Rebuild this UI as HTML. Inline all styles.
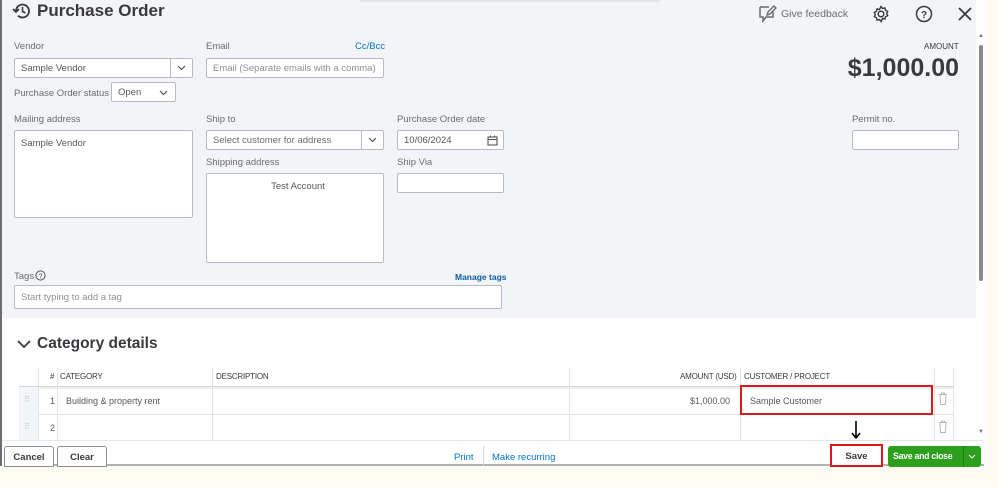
<!DOCTYPE html>
<html><head><meta charset="utf-8"><style>
*{box-sizing:border-box;margin:0;padding:0}
body{width:999px;height:488px;overflow:hidden;background:#fdfbf2;font-family:"Liberation Sans",sans-serif;position:relative;color:#393a3d}
.a{position:absolute}
.lbl{position:absolute;font-size:9.5px;color:#6b6c72}
.in{position:absolute;background:#fff;border:1px solid #b8bbc2;border-radius:2px;font-size:9.5px;color:#55575c;padding-left:6px;display:flex;align-items:center}
.ph{color:#8d9096}
.chev{position:absolute;right:0;top:0;bottom:0;width:22px;border-left:1px solid #b8bbc2;display:flex;align-items:center;justify-content:center}
.th{position:absolute;top:372px;font-size:8px;color:#393a3d;letter-spacing:-.2px}
.vl{position:absolute;width:1px;background:#e0e2e6}
</style></head><body>
<div class="a" style="left:0;top:0;width:986px;height:466px;background:#fff;border-left:2px solid #6d6e72"></div>
<div class="a" style="left:2px;top:0;width:974px;height:318px;background:#f3f4f8"></div>
<div class="a" style="left:360px;top:0;width:300px;height:2px;background:#e3e4e8"></div>
<svg class="a" style="left:12px;top:2px" width="20" height="18" viewBox="0 0 20 18"><path d="M4 9a6.5 6.5 0 1 1 2 4.7" fill="none" stroke="#393a3d" stroke-width="1.8"/><path d="M1 7l3 3 3-3" fill="none" stroke="#393a3d" stroke-width="1.8"/><path d="M10.5 5v4.5l3 1.5" fill="none" stroke="#393a3d" stroke-width="1.6"/></svg>
<div class="a" style="left:37px;top:1px;font-size:17px;font-weight:bold;color:#393a3d">Purchase Order</div>
<svg class="a" style="left:757px;top:5px" width="20" height="18" viewBox="0 0 20 18"><path d="M3 2h9M3 2v10h3v4l3-4h7v-5" fill="none" stroke="#6b6c72" stroke-width="1.5"/><path d="M10 10l1-3 6-6 2 2-6 6z" fill="none" stroke="#6b6c72" stroke-width="1.4"/></svg>
<div class="a" style="left:781px;top:8px;font-size:10.5px;color:#6b6c72">Give feedback</div>
<svg class="a" style="left:872px;top:5px" width="18" height="18" viewBox="0 0 18 18"><circle cx="9" cy="9" r="2.8" fill="none" stroke="#393a3d" stroke-width="1.5"/><path d="M9 1.5l1.5 2 2.4-.6.6 2.4 2.2 1.1-1 2.1 1 2.1-2.2 1.1-.6 2.4-2.4-.6L9 16.5l-1.5-2-2.4.6-.6-2.4L2.3 11.6l1-2.1-1-2.1 2.2-1.1.6-2.4 2.4.6z" fill="none" stroke="#393a3d" stroke-width="1.4"/></svg>
<svg class="a" style="left:915px;top:5px" width="18" height="18" viewBox="0 0 18 18"><circle cx="9" cy="9" r="7.5" fill="none" stroke="#393a3d" stroke-width="1.5"/><text x="9" y="13" font-size="10" font-weight="bold" text-anchor="middle" fill="#393a3d" font-family="Liberation Sans">?</text></svg>
<svg class="a" style="left:958px;top:7px" width="14" height="14" viewBox="0 0 14 14"><path d="M1 1l12 12M13 1L1 13" stroke="#393a3d" stroke-width="1.8"/></svg>
<div class="lbl" style="left:14px;top:41px">Vendor</div>
<div class="in" style="left:14px;top:58px;width:179px;height:20px">Sample Vendor<div class="chev"><svg width="9" height="6"><path d="M1 1l3.5 3.5L8 1" fill="none" stroke="#555" stroke-width="1.2"/></svg></div></div>
<div class="lbl" style="left:206px;top:41px">Email</div>
<div class="a" style="left:355px;top:41px;font-size:9.5px;color:#0077c5">Cc/Bcc</div>
<div class="in" style="left:206px;top:58px;width:178px;height:20px"><span class="ph">Email (Separate emails with a comma)</span></div>
<div class="a" style="left:924px;top:42px;font-size:8px;color:#393a3d">AMOUNT</div>
<div class="a" style="right:40px;top:54px;font-size:25px;font-weight:bold;color:#393a3d">$1,000.00</div>
<div class="lbl" style="left:14px;top:88px">Purchase Order status</div>
<div class="in" style="left:111px;top:82px;width:65px;height:20px">Open<svg class="a" style="right:7px;top:7px" width="9" height="6"><path d="M1 1l3.5 3.5L8 1" fill="none" stroke="#555" stroke-width="1.2"/></svg></div>
<div class="lbl" style="left:14px;top:114px">Mailing address</div>
<div class="in" style="left:14px;top:130px;width:179px;height:88px;align-items:flex-start;padding-top:7px">Sample Vendor</div>
<div class="lbl" style="left:206px;top:114px">Ship to</div>
<div class="in" style="left:206px;top:130px;width:178px;height:20px"><span class="ph" style="color:#6b6c72">Select customer for address</span><div class="chev"><svg width="9" height="6"><path d="M1 1l3.5 3.5L8 1" fill="none" stroke="#555" stroke-width="1.2"/></svg></div></div>
<div class="lbl" style="left:397px;top:114px">Purchase Order date</div>
<div class="in" style="left:397px;top:130px;width:107px;height:20px">10/06/2024<svg class="a" style="right:5px;top:4px" width="11" height="11"><rect x="1" y="2" width="9" height="8" fill="none" stroke="#555" stroke-width="1.1"/><path d="M1 4.5h9M3.5 0.5v2M7.5 0.5v2" stroke="#555"/></svg></div>
<div class="lbl" style="left:852px;top:114px">Permit no.</div>
<div class="in" style="left:852px;top:130px;width:107px;height:20px"></div>
<div class="lbl" style="left:206px;top:157px">Shipping address</div>
<div class="in" style="left:206px;top:173px;width:178px;height:90px;align-items:flex-start;justify-content:center;padding-top:7px;color:#55575c">Test Account</div>
<div class="lbl" style="left:397px;top:157px">Ship Via</div>
<div class="in" style="left:397px;top:173px;width:107px;height:20px"></div>
<div class="lbl" style="left:14px;top:271px">Tags</div>
<svg class="a" style="left:35px;top:270px" width="11" height="11"><circle cx="5.5" cy="5.5" r="4.6" fill="none" stroke="#555" stroke-width="1"/><text x="5.5" y="8.5" font-size="7" text-anchor="middle" fill="#555" font-family="Liberation Sans">?</text></svg>
<div class="a" style="left:455px;top:272px;font-size:8.5px;color:#0d5fa6;font-weight:bold">Manage tags</div>
<div class="in" style="left:14px;top:285px;width:488px;height:24px"><span class="ph">Start typing to add a tag</span></div>
<svg class="a" style="left:17px;top:339px" width="14" height="10"><path d="M1 2l6 6 6-6" fill="none" stroke="#393a3d" stroke-width="1.8"/></svg>
<div class="a" style="left:37px;top:335px;font-size:15.5px;font-weight:bold;color:#393a3d">Category details</div>
<div class="a" style="left:19px;top:386px;width:934px;height:1px;background:#d4d6da"></div>
<div class="a" style="left:19px;top:387px;width:934px;height:2px;background:#eceef1"></div>
<div class="a" style="left:19px;top:414px;width:934px;height:1px;background:#e0e2e6"></div>
<div class="a" style="left:19px;top:387px;width:19px;height:53px;background:#f3f4f8"></div>
<div class="vl" style="left:38px;top:368px;height:72px"></div>
<div class="vl" style="left:57px;top:368px;height:72px"></div>
<div class="vl" style="left:212px;top:368px;height:72px"></div>
<div class="vl" style="left:569px;top:368px;height:72px"></div>
<div class="vl" style="left:740px;top:368px;height:72px"></div>
<div class="vl" style="left:934px;top:368px;height:72px"></div>
<div class="vl" style="left:953px;top:368px;height:72px"></div>
<div class="th" style="left:50px">#</div>
<div class="th" style="left:60px">CATEGORY</div>
<div class="th" style="left:216px">DESCRIPTION</div>
<div class="th" style="left:680px">AMOUNT (USD)</div>
<div class="th" style="left:744px">CUSTOMER / PROJECT</div>
<div class="a" style="left:24px;top:395px;font-size:8px;color:#c0c2c6">⠿</div>
<div class="a" style="left:24px;top:422px;font-size:8px;color:#c0c2c6">⠿</div>
<div class="a" style="left:50px;top:396px;font-size:9px;color:#55575c">1</div>
<div class="a" style="left:50px;top:423px;font-size:9px;color:#55575c">2</div>
<div class="a" style="left:66px;top:396px;font-size:9px;color:#55575c">Building &amp; property rent</div>
<div class="a" style="left:690px;top:396px;font-size:9px;color:#55575c">$1,000.00</div>
<div class="a" style="left:740px;top:385px;width:193px;height:30px;border:2px solid #e0161f"></div>
<div class="a" style="left:750px;top:396px;font-size:9px;color:#55575c">Sample Customer</div>
<svg class="a" style="left:938px;top:392px" width="10" height="13"><path d="M1 2.5h8M3.5 2.5V1h3v1.5M2 2.5l.5 10h5l.5-10" fill="none" stroke="#b5b7bb" stroke-width="1"/></svg>
<svg class="a" style="left:938px;top:420px" width="10" height="13"><path d="M1 2.5h8M3.5 2.5V1h3v1.5M2 2.5l.5 10h5l.5-10" fill="none" stroke="#b5b7bb" stroke-width="1"/></svg>
<div class="a" style="left:976px;top:30px;width:10px;height:410px;background:#fff"></div>
<div class="a" style="left:979px;top:45px;width:4px;height:236px;background:#8a8b8e;border-radius:2px"></div>
<div class="a" style="left:978px;top:33px;font-size:6px;color:#777">▲</div>
<div class="a" style="left:978px;top:429px;font-size:6px;color:#777">▼</div>
<div class="a" style="left:2px;top:440px;width:980px;height:26px;background:#fff;border-top:1px solid #e6e7ea"></div>
<div class="a" style="left:14px;top:464px;width:970px;height:2px;background:#b0b2b6"></div>
<div class="a" style="left:4px;top:446px;width:50px;height:21px;border:1px solid #8d9096;border-radius:3px 3px 0 0;background:#fff;font-size:9.5px;font-weight:bold;color:#393a3d;text-align:center;line-height:21px">Cancel</div>
<div class="a" style="left:57px;top:446px;width:50px;height:21px;border:1px solid #8d9096;border-radius:3px 3px 0 0;background:#fff;font-size:9.5px;font-weight:bold;color:#393a3d;text-align:center;line-height:21px">Clear</div>
<div class="a" style="left:454px;top:452px;font-size:9.5px;color:#0077c5">Print</div>
<div class="a" style="left:483px;top:446px;width:1px;height:20px;background:#d4d6da"></div>
<div class="a" style="left:492px;top:452px;font-size:9.5px;color:#0077c5">Make recurring</div>
<svg class="a" style="left:850px;top:420px" width="12" height="20"><path d="M6 1v16M2 13l4 5 4-5" fill="none" stroke="#000" stroke-width="1.6"/></svg>
<div class="a" style="left:830px;top:444px;width:53px;height:23px;border:2px solid #e0161f;background:#fff;font-size:9.5px;font-weight:bold;color:#393a3d;text-align:center;line-height:22px">Save</div>
<div class="a" style="left:888px;top:446px;width:93px;height:21px;background:#2ca01c;border-radius:3px;font-size:8.8px;font-weight:bold;color:#fff;line-height:21px;padding-left:5px;letter-spacing:-.3px;white-space:nowrap">Save and close</div>
<div class="a" style="left:963px;top:446px;width:1px;height:21px;background:#1e7a12"></div>
<svg class="a" style="left:968px;top:454px" width="8" height="5"><path d="M1 1l3 3 3-3" fill="none" stroke="#fff" stroke-width="1"/></svg>
</body></html>
